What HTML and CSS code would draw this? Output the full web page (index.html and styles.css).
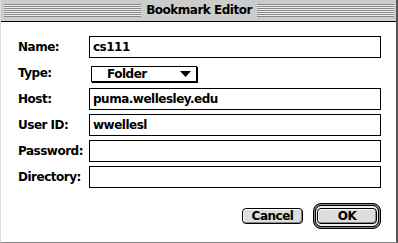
FILE: index.html
```html
<!DOCTYPE html>
<html lang="en">
<head>
    <meta charset="UTF-8">
    <title>Bookmark Editor</title>
    <link rel="stylesheet" href="styles.css">
</head>
<body>
    <div class="window">
        <div class="titlebar">
            <span class="stripes"></span>
            <span class="title">Bookmark Editor</span>
            <span class="stripes"></span>
        </div>
        <div class="content">
            <div class="form">
                <label>Name:</label>
                <div class="field">cs111</div>
                <label>Type:</label>
                <div class="popup">
                    <span>Folder</span>
                    <svg width="11" height="6" viewBox="0 0 11 6"><polygon points="0,0 11,0 5.5,6" fill="#000"/></svg>
                </div>
                <label>Host:</label>
                <div class="field">puma.wellesley.edu</div>
                <label>User ID:</label>
                <div class="field">wwellesl</div>
                <label>Password:</label>
                <div class="field"></div>
                <label>Directory:</label>
                <div class="field"></div>
            </div>
            <div class="buttons">
                <button class="btn">Cancel</button>
                <span class="default-ring"><button class="btn">OK</button></span>
            </div>
        </div>
    </div>
</body>
</html>
```

FILE: styles.css
```css
* {
    box-sizing: border-box;
}
body {
    margin: 0;
    font-family: 'DejaVu Sans', sans-serif;
    font-weight: bold;
    font-size: 12px;
    letter-spacing: -0.5px;
    color: #000;
    background: #fff;
}
.window {
    width: 398px;
    height: 243px;
    display: flex;
    flex-direction: column;
    background: #fff;
    border-left: 1px solid #ddd;
    border-right: 2px solid #555;
    border-bottom: 1px solid #888;
}
.titlebar {
    height: 22px;
    display: flex;
    align-items: center;
    padding: 0 2px 1px 3px;
    background: #ccc;
    border-bottom: 1px solid #000;
}
.stripes {
    flex: 1;
    height: 13px;
    background: repeating-linear-gradient(#888 0 1px, #eee 1px 2px);
}
.title {
    padding: 0 5px;
    line-height: 13px;
}
.content {
    flex: 1;
    padding: 14px 15px 0 17px;
}
.form {
    display: grid;
    grid-template-columns: 71px 292px;
    grid-auto-rows: 22px;
    row-gap: 4px;
}
.form label {
    align-self: center;
}
.field {
    border: 1px solid #000;
    padding-left: 3px;
    line-height: 20px;
}
.popup {
    align-self: center;
    margin: 1px 0 0 2px;
    width: 106px;
    height: 16px;
    border: 1px solid #000;
    box-shadow: 1px 1px 0 #000;
    display: flex;
    align-items: center;
    justify-content: space-between;
    padding: 0 5px 0 15px;
    line-height: 14px;
}
.buttons {
    width: 363px;
    margin-top: 15px;
    display: flex;
    justify-content: flex-end;
    align-items: center;
    gap: 10px;
}
.btn {
    width: 61px;
    height: 16px;
    padding: 0;
    font: inherit;
    letter-spacing: inherit;
    line-height: 14px;
    color: #000;
    background: #ddd;
    border: 1px solid #000;
    border-radius: 4px;
    box-shadow: inset 1px 1px 0 #fff, inset -1px -1px 0 #888;
}
.default-ring {
    display: flex;
    padding: 2px 1px;
    border: 3px double #000;
    border-radius: 8px;
    background: linear-gradient(#eee, #eee) padding-box, #888 border-box;
}
.default-ring .btn {
    width: 60px;
}
```
